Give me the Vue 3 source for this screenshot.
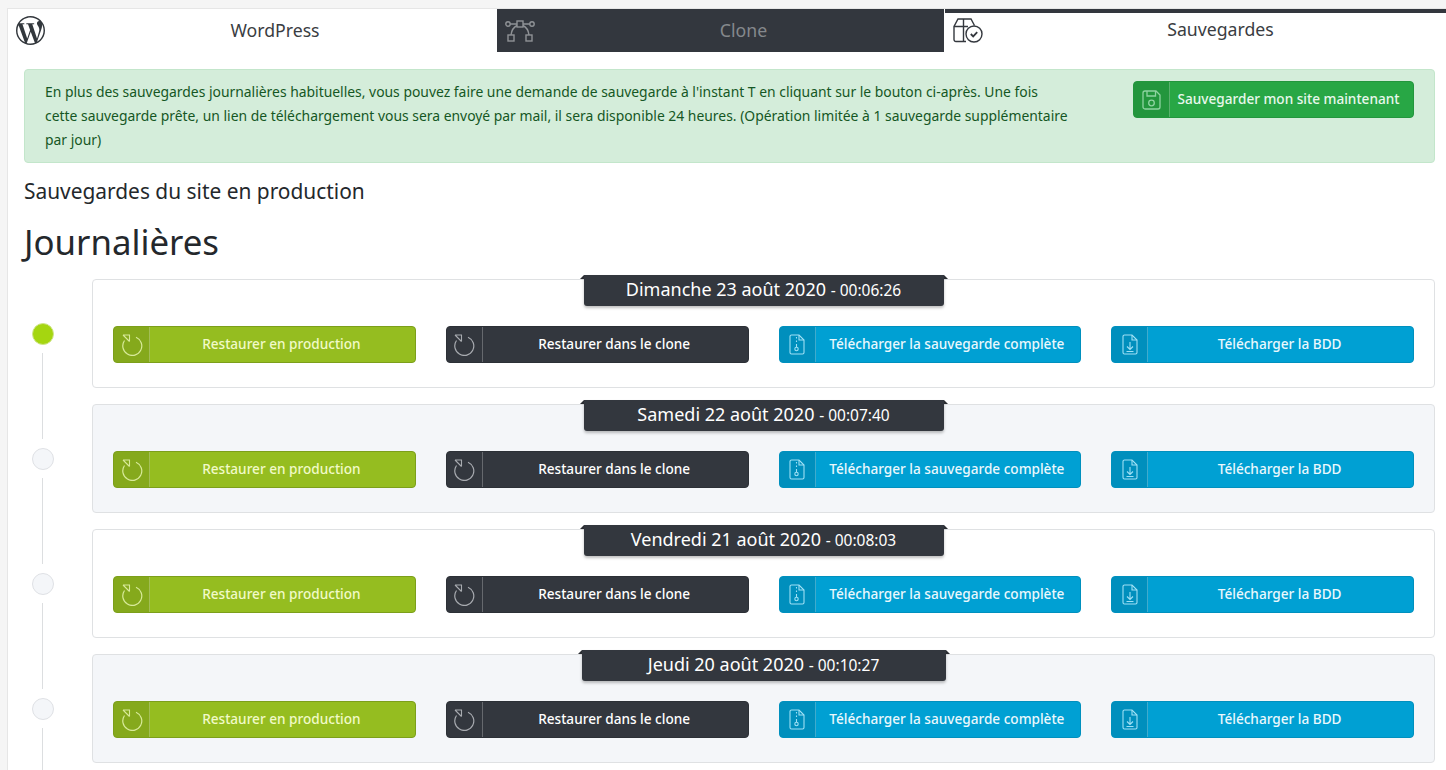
<script setup>
const days = [
  { date: 'Dimanche 23 août 2020', time: '00:06:26', active: true },
  { date: 'Samedi 22 août 2020', time: '00:07:40' },
  { date: 'Vendredi 21 août 2020', time: '00:08:03' },
  { date: 'Jeudi 20 août 2020', time: '00:10:27', wide: true },
]
const actions = [
  { label: 'Restaurer en production', tone: 'lime', icon: 'restore' },
  { label: 'Restaurer dans le clone', tone: 'dark', icon: 'restore' },
  { label: 'Télécharger la sauvegarde complète', tone: 'blue', icon: 'zip' },
  { label: 'Télécharger la BDD', tone: 'blue', icon: 'down' },
]
</script>

<template>
  <div class="page">
    <nav class="tabs">
      <div class="tab tab-wp">
        <svg class="wp" viewBox="0 0 24 24" width="29" height="29"><path fill="#32373c" d="M21.469 6.825c.84 1.537 1.318 3.3 1.318 5.175 0 3.979-2.156 7.456-5.363 9.325l3.295-9.527c.615-1.54.82-2.771.82-3.864 0-.405-.026-.78-.07-1.11m-7.981.105c.647-.03 1.232-.105 1.232-.105.582-.075.514-.93-.067-.899 0 0-1.755.135-2.88.135-1.064 0-2.85-.15-2.85-.15-.585-.03-.661.855-.075.885 0 0 .54.061 1.125.09l1.68 4.605-2.37 7.08L5.354 6.9c.649-.03 1.234-.1 1.234-.1.585-.075.516-.93-.065-.896 0 0-1.746.138-2.874.138-.2 0-.438-.008-.69-.015C4.911 3.15 8.235 1.215 12 1.215c2.809 0 5.365 1.072 7.286 2.833-.046-.003-.091-.009-.141-.009-1.06 0-1.812.923-1.812 1.914 0 .89.513 1.643 1.06 2.531.411.72.89 1.643.89 2.977 0 .915-.354 1.994-.821 3.479l-1.075 3.585-3.9-11.61.001.014zM12 22.784c-1.059 0-2.081-.153-3.048-.437l3.237-9.406 3.315 9.087c.024.053.05.101.078.149-1.12.393-2.325.609-3.582.609M1.211 12c0-1.564.336-3.05.935-4.39L7.29 21.709C3.694 19.96 1.212 16.271 1.211 12M12 0C5.385 0 0 5.385 0 12s5.385 12 12 12 12-5.385 12-12S18.615 0 12 0"/></svg>
        <span>WordPress</span>
      </div>
      <div class="tab tab-clone">
        <svg class="tab-icon" viewBox="0 0 30 22" width="30" height="22" fill="none" stroke="#8f9296" stroke-width="1.4">
          <circle cx="3" cy="4" r="2.200"/><circle cx="27" cy="4" r="2.200"/>
          <rect x="12" y="1" width="6" height="6"/>
          <rect x="3" y="15" width="6" height="6"/><rect x="21" y="15" width="6" height="6"/>
          <path d="M5.200 4H12M18 4h6.800M6 15C6.500 10.500 9 7 12 5.500M24 15C23.500 10.500 21 7 18 5.500"/>
        </svg>
        <span>Clone</span>
      </div>
      <div class="tab tab-save">
        <svg class="tab-icon" viewBox="0 0 30 25" width="30" height="25" fill="none" stroke="#34383e" stroke-width="1.400">
          <path d="M13 23.500H3a2 2 0 0 1-2-2V8.500L5 1h13l3.500 6.500M1 8.500h14M10.500 1v22.500"/>
          <circle cx="21" cy="16" r="8"/>
          <path d="M17.800 16l2.400 2.400 4-4.200" stroke-width="1.800"/>
        </svg>
        <span>Sauvegardes</span>
      </div>
    </nav>

    <main class="content">
      <section class="alert">
        <p>En plus des sauvegardes journalières habituelles, vous pouvez faire une demande de sauvegarde à l'instant T en cliquant sur le bouton ci-après. Une fois cette sauvegarde prête, un lien de téléchargement vous sera envoyé par mail, il sera disponible 24 heures. (Opération limitée à 1 sauvegarde supplémentaire par jour)</p>
        <button class="btn save">
          <span class="ico">
            <svg viewBox="0 0 19 20" width="19" height="20" fill="none" stroke="currentColor" stroke-width="1.300"><path d="M3 1h11l4 4v12a2 2 0 0 1-2 2H3a2 2 0 0 1-2-2V3a2 2 0 0 1 2-2z"/><path d="M5 1v5h8.500V1"/><circle cx="9.500" cy="13" r="2.800"/></svg>
          </span>
          <span class="lbl">Sauvegarder mon site maintenant</span>
        </button>
      </section>

      <h2>Sauvegardes du site en production</h2>
      <h1>Journalières</h1>

      <div v-for="(d, i) in days" :key="d.date" class="row">
        <div class="rail">
          <span class="dot" :class="{ on: d.active }"></span>
          <span class="line"></span>
        </div>
        <article class="card" :class="{ alt: i % 2 === 1 }">
          <div class="stamp" :class="{ wide: d.wide }">{{ d.date }} <small>- {{ d.time }}</small></div>
          <div class="actions">
            <button v-for="a in actions" :key="a.label" class="btn" :class="a.tone">
              <span class="ico">
                <svg v-if="a.icon === 'restore'" viewBox="0 0 22 22" width="22" height="22" fill="none" stroke="currentColor" stroke-width="1.200">
                  <path d="M3.500 6.500A9.500 9.500 0 1 0 15 3.200"/><path d="M2 1h6.500v6.500M2 1l6.500 6.500" stroke-width="1.100"/>
                </svg>
                <svg v-else-if="a.icon === 'zip'" viewBox="0 0 16 21" width="16" height="21" fill="none" stroke="currentColor" stroke-width="1.100">
                  <path d="M2.500 1H10l5 5v12.500a1.500 1.500 0 0 1-1.500 1.500h-11A1.500 1.500 0 0 1 1 18.500v-16A1.500 1.500 0 0 1 2.500 1z"/><path d="M10 1v5h5"/><path d="M7.500 3v1.500M7.500 6.500V8M7.500 10v3"/><circle cx="7.500" cy="15" r="1.700"/>
                </svg>
                <svg v-else viewBox="0 0 16 21" width="16" height="21" fill="none" stroke="currentColor" stroke-width="1.100">
                  <path d="M2.500 1H10l5 5v12.500a1.500 1.500 0 0 1-1.500 1.500h-11A1.500 1.500 0 0 1 1 18.500v-16A1.500 1.500 0 0 1 2.500 1z"/><path d="M10 1v5h5"/><path d="M8 8v7.500M5 12.500l3 3 3-3M4.500 17.500h7"/>
                </svg>
              </span>
              <span class="lbl">{{ a.label }}</span>
            </button>
          </div>
        </article>
      </div>
    </main>
  </div>
</template>

<style>
html, body { margin: 0; height: 100%; overflow: hidden; background: #f5f5f5; }
</style>

<style scoped>
.page {
  margin: 8px 0 0 7px;
  min-height: 770px;
  background: #fff;
  font-family: "Noto Sans", "Liberation Sans", sans-serif;
  color: #24282c;
  border-left: 1px solid #e6e6e6;
  border-top: 1px solid #e6e6e6;
}
.tabs { display: grid; grid-template-columns: 489px 447px 1fr; height: 43px; }
.tab { display: flex; align-items: center; box-sizing: border-box; font-size: 17.700px; line-height: 24px; color: #3a3d42; }
.tab span { flex: 1; text-align: center; position: relative; top: -1px; }
.wp { flex: none; margin: -1px 8px 0 8px; }
.tab-icon { flex: none; margin-left: 8px; }
.tab-clone { background: #33373e; color: #85888c; }
.tab-clone .tab-icon { margin-right: 8px; }
.tab-save { margin-left: 1px; border-top: 4px solid #33373e; }
.tab-save .tab-icon { margin-top: -4px; margin-right: 12px; }
.tab-save span { top: -4px; }

.content { padding: 17px 11px 0 16px; }
.alert {
  box-sizing: border-box;
  height: 94px;
  display: flex;
  justify-content: space-between;
  align-items: flex-start;
  padding: 10px 20px 0 20px;
  background: #d4edda;
  border: 1px solid #c3e6cb;
  border-radius: 4px;
}
.alert p { margin: 0; width: 1026px; font-size: 13.900px; line-height: 24px; color: #155724; }
h2 { margin: 16px 0 0; font-size: 20.900px; line-height: 24px; font-weight: 400; color: #24282c; }
h1 { margin: 18px 0 0; font-size: 34.800px; line-height: 42px; font-weight: 400; color: #24282c; }

.row { display: flex; margin-top: 16px; }
.rail { flex: 0 0 68px; box-sizing: border-box; height: 109px; padding: 44px 0 0 8px; display: flex; flex-direction: column; align-items: flex-start; }
.dot { flex: none; box-sizing: border-box; width: 22px; height: 22px; border-radius: 50%; background: #f4f6f9; border: 1px solid #dfe1e5; }
.dot.on { background: #a5d610; border-color: #cfe58a; }
.line { flex: none; width: 1px; height: 86px; margin: 8px 0 0 10px; background: #dcdee0; }

.card {
  position: relative;
  flex: 1;
  box-sizing: border-box;
  height: 109px;
  padding: 46px 20px 0;
  background: #fff;
  border: 1px solid #dfe1e3;
  border-radius: 4px;
}
.card.alt { background: #f4f6f9; }
.stamp {
  position: absolute;
  top: -5px;
  left: 50%;
  transform: translateX(-50%);
  box-sizing: border-box;
  width: 360px;
  height: 31px;
  line-height: 29px;
  text-align: center;
  white-space: nowrap;
  font-size: 18px;
  color: #fff;
  background: #33373e;
  border-radius: 0 0 3px 3px;
  box-shadow: 0 2px 3px rgba(0, 0, 0, .25);
}
.stamp.wide { width: 364px; }
.stamp::before, .stamp::after {
  content: "";
  position: absolute;
  top: 0;
  width: 0;
  height: 0;
  border-bottom: 4px solid #2a2d32;
}
.stamp::before { left: -4px; border-left: 4px solid transparent; }
.stamp::after { right: -4px; border-right: 4px solid transparent; }
.stamp small { font-size: 15.500px; }

.actions { display: grid; grid-template-columns: repeat(4, 1fr); column-gap: 30px; }
.btn {
  display: flex;
  align-items: stretch;
  box-sizing: border-box;
  height: 37px;
  padding: 0;
  border: 1px solid;
  border-radius: 4px;
  font: inherit;
  font-size: 13.600px;
  line-height: 18px;
  font-weight: 500;
  overflow: hidden;
}
.ico {
  flex: 0 0 36px;
  display: flex;
  align-items: center;
  justify-content: center;
  background: rgba(0, 0, 0, .1);
  border-right: 1px solid rgba(255, 255, 255, .25);
  box-sizing: border-box;
}
.lbl { flex: 1; align-self: center; text-align: center; padding: 0 2px 2px 0; }
.lime { background: #95bd20; border-color: #7c9f1a; color: #f1fac8; }
.lime .ico { color: #d8ea9a; }
.dark { background: #33373e; border-color: #2c3036; color: #fff; }
.dark .ico { background: transparent; color: #a8abb0; }
.blue { background: #00a0d3; border-color: #0090be; color: #eaf8fd; }
.blue .ico { color: #9fe0f5; }
.save { flex: none; width: 281px; margin-top: 1px; background: #28a745; border-color: #23963d; color: #e8f8ec; }
.save .ico { color: #8fd3a1; }
.save .lbl { padding: 0 6px 2px 0; white-space: nowrap; }
</style>
